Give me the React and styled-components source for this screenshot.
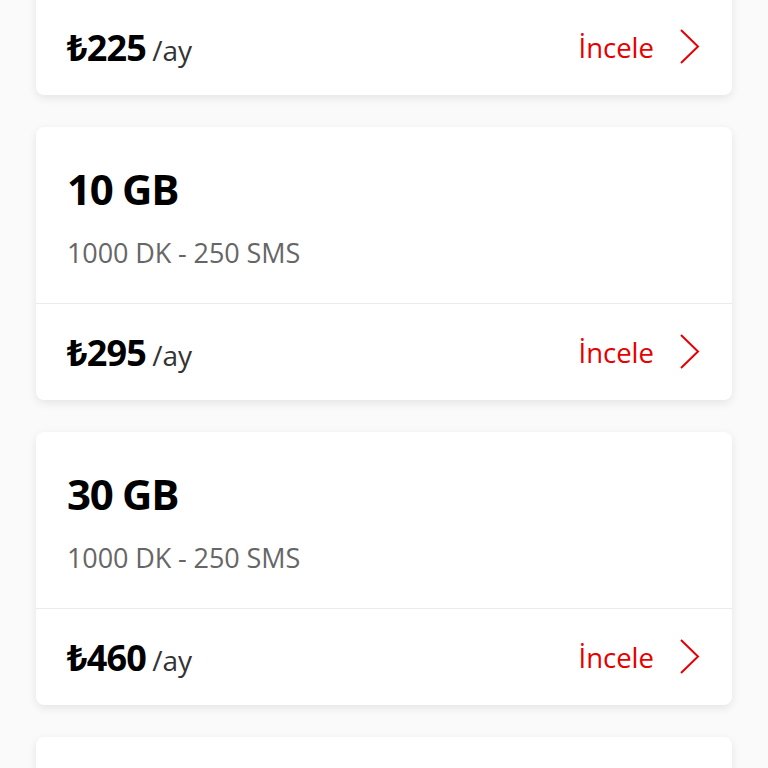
import React from "react";
import styled, { createGlobalStyle } from "styled-components";

const GlobalStyle = createGlobalStyle`
  html, body {
    margin: 0;
    padding: 0;
    background: #fafafa;
    font-family: "Open Sans", "Noto Sans", "DejaVu Sans", sans-serif;
    overflow: hidden;
  }
`;

const Page = styled.div`
  height: 768px;
  overflow: hidden;
  padding: 0 36px;
`;

const List = styled.div`
  display: flex;
  flex-direction: column;
  gap: 32px;
  margin-top: -178px;
`;

const Card = styled.section`
  background: #ffffff;
  border-radius: 8px;
  box-shadow: 0 3px 10px rgba(0, 0, 0, 0.09);
  display: flex;
  flex-direction: column;
`;

const Body = styled.div`
  height: 177px;
  box-sizing: border-box;
  padding: 37px 31px 0;
  border-bottom: 1px solid #ebebeb;
`;

const Title = styled.h2`
  margin: 0;
  font-size: 42px;
  line-height: 50px;
  font-weight: 700;
  color: #000;
  letter-spacing: -1.3px;
`;

const Details = styled.p`
  margin: 23px 0 0;
  font-size: 27px;
  line-height: 32px;
  color: #666;
  letter-spacing: -0.1px;
`;

const Footer = styled.div`
  height: 96px;
  box-sizing: border-box;
  padding: 0 31px 0 31px;
  display: flex;
  align-items: center;
  justify-content: space-between;
`;

const Price = styled.div`
  display: flex;
  align-items: baseline;
  gap: 6px;
`;

const Amount = styled.span`
  font-size: 36px;
  font-weight: 700;
  color: #000;
  letter-spacing: -0.8px;
`;

const Period = styled.span`
  font-size: 28px;
  color: #333;
`;

const Review = styled.a`
  display: flex;
  align-items: center;
  gap: 25px;
  color: #e60000;
  font-size: 27.5px;
  text-decoration: none;
`;

const Chevron = () => (
  <svg width="22" height="38" viewBox="0 0 22 38" fill="none">
    <path d="M2 2 L19 18.5 L2 35" stroke="#e60000" strokeWidth="2" />
  </svg>
);

const plans = [
  { gb: "5 GB", details: "1000 DK - 250 SMS", price: "225" },
  { gb: "10 GB", details: "1000 DK - 250 SMS", price: "295" },
  { gb: "30 GB", details: "1000 DK - 250 SMS", price: "460" },
  { gb: "50 GB", details: "1000 DK - 250 SMS", price: "620" },
];

export default function App() {
  return (
    <>
      <GlobalStyle />
      <Page>
        <List>
          {plans.map((p) => (
            <Card key={p.gb}>
              <Body>
                <Title>{p.gb}</Title>
                <Details>{p.details}</Details>
              </Body>
              <Footer>
                <Price>
                  <Amount>₺{p.price}</Amount>
                  <Period>/ay</Period>
                </Price>
                <Review href="#">
                  İncele
                  <Chevron />
                </Review>
              </Footer>
            </Card>
          ))}
        </List>
      </Page>
    </>
  );
}
